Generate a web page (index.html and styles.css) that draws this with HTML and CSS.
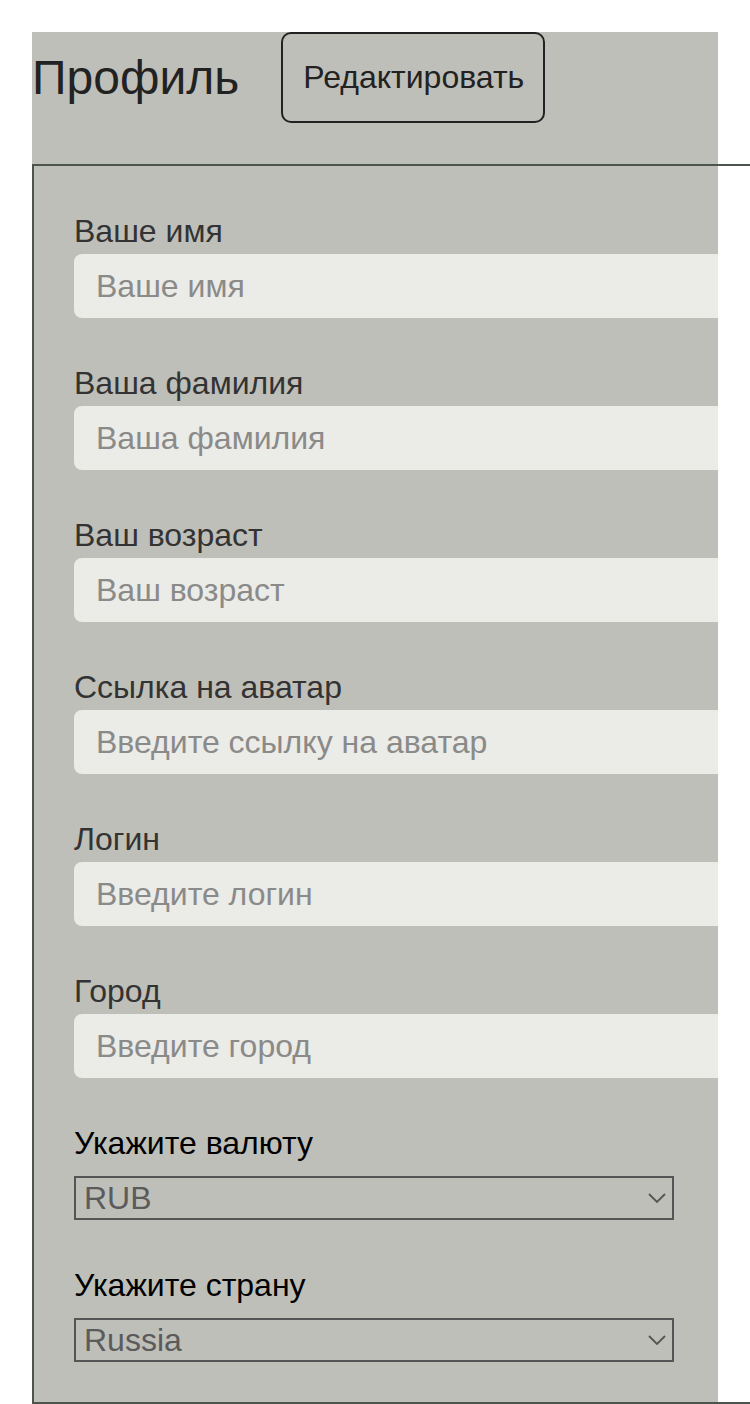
FILE: index.html
```html
<!DOCTYPE html>
<html lang="ru">
<head>
<meta charset="utf-8">
<title>Профиль</title>
<link rel="stylesheet" href="styles.css">
</head>
<body>
<div class="profile">
  <div class="header">
    <h1 class="title">Профиль</h1>
    <button class="edit-btn" type="button">Редактировать</button>
  </div>
  <div class="card">
    <div class="field">
      <label class="label">Ваше имя</label>
      <input class="input" type="text" placeholder="Ваше имя">
    </div>
    <div class="field">
      <label class="label">Ваша фамилия</label>
      <input class="input" type="text" placeholder="Ваша фамилия">
    </div>
    <div class="field">
      <label class="label">Ваш возраст</label>
      <input class="input" type="text" placeholder="Ваш возраст">
    </div>
    <div class="field">
      <label class="label">Ссылка на аватар</label>
      <input class="input" type="text" placeholder="Введите ссылку на аватар">
    </div>
    <div class="field">
      <label class="label">Логин</label>
      <input class="input" type="text" placeholder="Введите логин">
    </div>
    <div class="field">
      <label class="label">Город</label>
      <input class="input" type="text" placeholder="Введите город">
    </div>
    <div class="field select-field">
      <label class="label label-dark">Укажите валюту</label>
      <div class="select-wrap">
        <select class="select"><option>RUB</option></select>
        <svg class="chevron" width="18" height="10" viewBox="0 0 18 10"><path d="M1 1 L9 9 L17 1" fill="none" stroke="#555" stroke-width="1.8"/></svg>
      </div>
    </div>
    <div class="field select-field">
      <label class="label label-dark">Укажите страну</label>
      <div class="select-wrap">
        <select class="select"><option>Russia</option></select>
        <svg class="chevron" width="18" height="10" viewBox="0 0 18 10"><path d="M1 1 L9 9 L17 1" fill="none" stroke="#555" stroke-width="1.8"/></svg>
      </div>
    </div>
  </div>
</div>
</body>
</html>
```

FILE: styles.css
```css
html {
  overflow-x: hidden;
}
body {
  margin: 0;
  padding: 32px 0 0 32px;
  font-family: "Liberation Sans", Arial, Helvetica, sans-serif;
  background: #ffffff;
}
.profile {
  width: 686px;
  background: #bfbfb9;
}
.header {
  display: flex;
  align-items: center;
  gap: 42px;
  padding-bottom: 41px;
}
.title {
  margin: 0;
  font-size: 48px;
  font-weight: 400;
  color: #222222;
  line-height: 56px;
}
.edit-btn {
  width: 264px;
  height: 91px;
  border: 2px solid #222222;
  border-radius: 10px;
  background: transparent;
  font-family: "Liberation Sans", Arial, sans-serif;
  font-size: 32px;
  color: #222222;
  padding: 0 0 0 1px;
}
.card {
  width: 760px;
  border: 2px solid #4d544d;
  border-right: none;
  padding: 0 0 40px 40px;
  box-sizing: border-box;
}
.field {
  display: flex;
  flex-direction: column;
  align-items: flex-start;
  padding-top: 47px;
}
.label {
  font-size: 32px;
  line-height: 36px;
  color: #333333;
}
.label-dark {
  color: #000000;
}
.input {
  margin-top: 5px;
  width: 644px;
  height: 64px;
  box-sizing: border-box;
  border: none;
  border-radius: 8px 0 0 8px;
  background: #ebebe8;
  padding: 0 22px;
  font-family: "Liberation Sans", Arial, sans-serif;
  font-size: 32px;
  color: #333333;
  outline: none;
}
.input::placeholder {
  color: #8a8a88;
}
.select-field .select-wrap {
  margin-top: 15px;
  position: relative;
  width: 600px;
}
.select {
  -webkit-appearance: none;
  appearance: none;
  display: block;
  width: 600px;
  height: 44px;
  box-sizing: border-box;
  border: 2px solid #555555;
  border-radius: 0;
  background: transparent;
  padding: 0 0 0 8px;
  font-family: "Liberation Sans", Arial, sans-serif;
  font-size: 32px;
  color: #5b5b5b;
  outline: none;
}
.chevron {
  position: absolute;
  right: 8px;
  top: 17px;
  pointer-events: none;
}
```
